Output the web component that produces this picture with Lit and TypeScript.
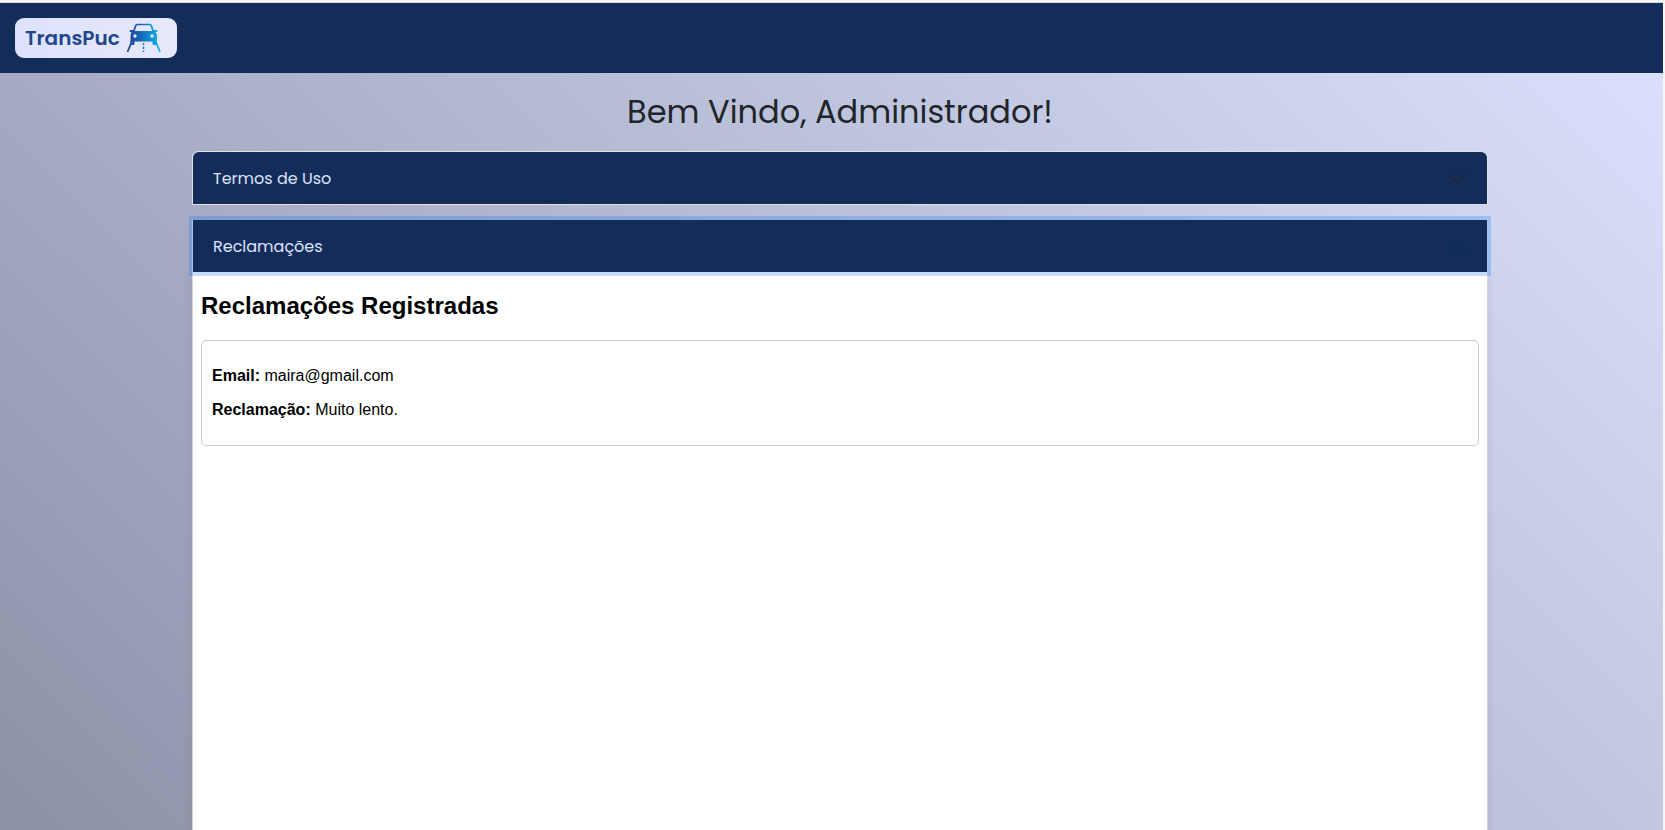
import { LitElement, html, css, svg } from "lit";
import { customElement, state } from "lit/decorators.js";

@customElement("transpuc-logo")
class TranspucLogo extends LitElement {
  static styles = css`
    :host { display: block; }
    .logo {
      display: flex;
      align-items: center;
      gap: 6px;
      box-sizing: border-box;
      width: 162px;
      height: 40px;
      padding-left: 10px;
      border-radius: 9px;
      background: linear-gradient(90deg, #dde2fd, #e6e8fb);
      color: #21468b;
      font: 600 20px/40px "Poppins", "Lato", sans-serif;
      text-decoration: none;
    }
    .word { width: 95px; }
    svg { display: block; }
  `;
  render() {
    return html`<a class="logo" href="#"><span class="word">TransPuc</span>
      <svg width="36" height="30" viewBox="0 0 36 30" aria-hidden="true">
        <defs>
          <linearGradient id="g" gradientUnits="userSpaceOnUse" x1="2" y1="0" x2="34" y2="0">
            <stop offset="0" stop-color="#26429a" />
            <stop offset="0.4" stop-color="#1468b8" />
            <stop offset="1" stop-color="#0fb4ea" />
          </linearGradient>
        </defs>
        <path d="M7.500 9 L9.700 2.600 Q10.100 1.500 11.300 1.500 H23.700 Q24.900 1.500 25.300 2.600 L27.500 9" fill="none" stroke="url(#g)" stroke-width="1.700" />
        <path fill="url(#g)" fill-rule="evenodd" d="M4.500 7 H7.500 L8.500 8 H26.500 L27.500 7 H30.500 Q31.500 7 31.500 8 T30.500 9 H29.500 Q31 11 31 13 V20.500 Q31 22 29.500 22 H28 Q26.500 22 26.500 20.500 V18.500 H8.500 V20.500 Q8.500 22 7.500 22 H6 Q4.500 22 4.500 20.500 V13 Q4.500 11 5.500 9 H4.500 Q3.500 9 3.500 8 T4.500 7 Z M9 11.300 a1.700 1.700 0 1 0 0.010 0 Z M26 11.300 a1.700 1.700 0 1 0 0.010 0 Z" />
        <path d="M6 18 L1.500 29 M29.500 18 L34 29" fill="none" stroke="url(#g)" stroke-width="1.800" />
        <path d="M17.500 20 V22 M17.500 23.500 V26 M17.500 27.500 V29" stroke="#167bc4" stroke-width="1.500" />
      </svg></a>`;
  }
}

@customElement("app-root")
class AppRoot extends LitElement {
  static styles = css`
    :host {
      display: flex;
      flex-direction: column;
      box-sizing: border-box;
      height: 100vh;
      overflow: hidden;
      padding: 2px 2px 0 0;
      background: #f6f6f7;
      color: #212529;
      font-family: "Poppins", "Inter", sans-serif;
    }
    .bar {
      box-sizing: border-box;
      flex: none;
      height: 71px;
      padding: 15px;
      border-top: 1px solid #d9d9d9;
      background: #142c5a;
    }
    .page {
      flex: 1;
      min-height: 0;
      padding: 20px 0 0 17px;
      background: linear-gradient(45deg, #8d91a8, #dae0fb);
    }
    .container { max-width: 1296px; margin: 0 auto; }
    h1 {
      margin: 0 0 20px;
      font-size: 32px;
      line-height: 38px;
      font-weight: 400;
      text-align: center;
    }
    .item {
      box-sizing: border-box;
      margin-bottom: 15px;
      border: 1px solid #dee2e6;
    }
    .item:first-of-type, .item:first-of-type .toggle { border-radius: 6px 6px 0 0; }
    .item:not(:first-of-type) { border-top: 0; }
    .item h2 { margin: 0; }
    .toggle {
      display: flex;
      align-items: center;
      justify-content: space-between;
      width: 100%;
      height: 52px;
      padding: 2px 20px 0;
      border: 0;
      background: #142c5a;
      color: #dce3fb;
      font: 400 16px/24px "Poppins", "Inter", sans-serif;
      text-align: left;
    }
    .toggle.open {
      outline: none;
      box-shadow: 0 0 0 4px rgba(13, 110, 253, 0.25);
      position: relative;
    }
    .toggle svg { width: 20px; height: 20px; fill: none; stroke: #212529; stroke-width: 1.600; }
    .toggle.open svg { stroke: #052c65; transform: rotate(180deg); }
    .panel {
      height: 1000px;
      padding: 20px 8px;
      background: #fff;
      box-shadow: 0 0 10px rgba(0, 0, 0, 0.1);
      color: #000;
      font: 16px/18px "Liberation Sans", Arial, sans-serif;
    }
    .panel h3 { margin: 0 0 20px; font-size: 24px; line-height: 28px; font-weight: 700; }
    .card { padding: 10px; border: 1px solid #ccc; border-radius: 5px; }
    .card p { margin: 16px 0; }
  `;

  @state() private open = 1;

  private panel(i: number) {
    return i === 0
      ? html`<p>Termos de Uso</p>`
      : html`<h3>Reclamações Registradas</h3>
          <div class="card">
            <p><strong>Email:</strong> maira@gmail.com</p>
            <p><strong>Reclamação:</strong> Muito lento.</p>
          </div>`;
  }

  render() {
    return html`
      <header class="bar"><transpuc-logo></transpuc-logo></header>
      <main class="page">
        <div class="container">
          <h1>Bem Vindo, Administrador!</h1>
          ${["Termos de Uso", "Reclamações"].map(
            (title, i) => html`<section class="item">
              <h2>
                <button
                  class="toggle ${this.open === i ? "open" : ""}"
                  aria-expanded=${this.open === i}
                  @click=${() => (this.open = this.open === i ? -1 : i)}
                >
                  ${title}
                  <svg viewBox="0 0 20 20" aria-hidden="true">${svg`<path d="M2.500 6 L10 13.500 L17.500 6" stroke-linecap="round" stroke-linejoin="round" />`}</svg>
                </button>
              </h2>
              ${this.open === i ? html`<div class="panel">${this.panel(i)}</div>` : ""}
            </section>`
          )}
        </div>
      </main>
    `;
  }
}
